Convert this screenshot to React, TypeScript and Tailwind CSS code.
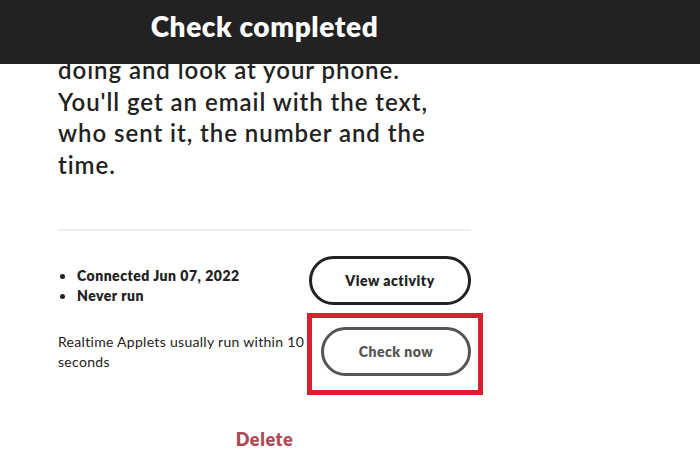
import React from 'react';

const FONT = "font-['Lato','Noto_Sans',sans-serif]";

const ActionButton: React.FC<{ label: string; muted?: boolean; width: string }> = ({ label, muted, width }) => (
    <button
        className={`${width} h-[49px] rounded-full border-[3px] bg-white text-[14px] font-extrabold tracking-[0.5px] ${
            muted ? 'border-[#555555] text-[#555555]' : 'border-[#222222] text-[#222222]'
        }`}
    >
        {label}
    </button>
);

const App: React.FC = () => {
    return (
        <div className={`w-[700px] h-[468px] bg-white overflow-hidden text-[#222222] ${FONT}`}>
            {/* toast bar */}
            <div className="h-[64px] bg-[#222222]">
                <div className="ml-[58px] w-[413px] pt-[8px] text-center text-[28px] leading-[36px] font-extrabold tracking-[0.6px] text-white">
                    Check completed
                </div>
            </div>

            <div className="ml-[58px] w-[413px]">
                <div className="overflow-hidden">
                    <p className="-mt-[10px] text-[24px] leading-[31.5px] font-semibold tracking-[0.95px]">
                        doing and look at your phone.
                        <br />
                        You'll get an email with the text,
                        <br />
                        who sent it, the number and the
                        <br />
                        time.
                    </p>
                </div>

                <div className="mt-[49px] h-[2px] bg-[#eeeeee]" />

                <div className="mt-[25px] flex items-start justify-between">
                    <ul className="mt-[10px] pl-[18px] list-disc text-[14px] leading-[20px] font-extrabold tracking-[0.5px]">
                        <li className="pl-[1px]">Connected Jun 07, 2022</li>
                        <li className="pl-[1px]">Never run</li>
                    </ul>
                    <ActionButton label="View activity" width="w-[162px]" />
                </div>

                <div className="mt-[21px] flex items-center justify-between">
                    <p className="w-[262px] text-[14px] leading-[20px] tracking-[0.3px]">
                        Realtime Applets usually run within 10 seconds
                    </p>
                    <div className="relative">
                        <ActionButton label="Check now" muted width="w-[150px]" />
                        <div className="absolute -left-[14px] -right-[12px] -top-[14px] -bottom-[19px] border-[5px] border-[#dc1f2e] pointer-events-none" />
                    </div>
                </div>

                <div className="mt-[50px] text-center text-[18px] font-extrabold tracking-[0.6px] text-[#ac4b55]">
                    Delete
                </div>
            </div>
        </div>
    );
};

export default App;
